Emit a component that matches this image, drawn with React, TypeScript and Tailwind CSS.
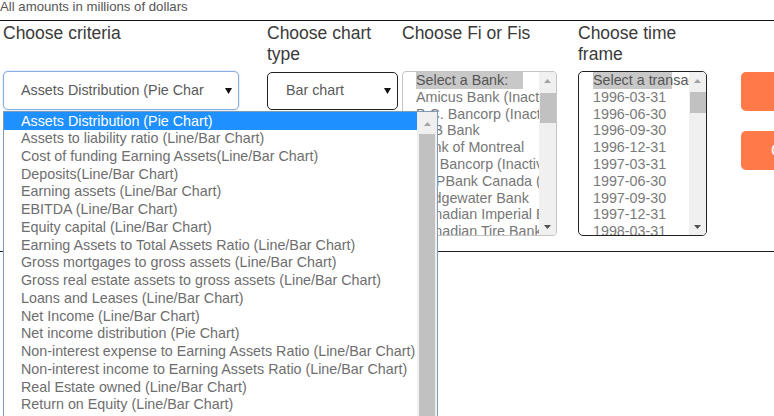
import React from 'react';

const CRITERIA: string[] = [
    'Assets Distribution (Pie Chart)',
    'Assets to liability ratio (Line/Bar Chart)',
    'Cost of funding Earning Assets(Line/Bar Chart)',
    'Deposits(Line/Bar Chart)',
    'Earning assets (Line/Bar Chart)',
    'EBITDA (Line/Bar Chart)',
    'Equity capital (Line/Bar Chart)',
    'Earning Assets to Total Assets Ratio (Line/Bar Chart)',
    'Gross mortgages to gross assets (Line/Bar Chart)',
    'Gross real estate assets to gross assets (Line/Bar Chart)',
    'Loans and Leases (Line/Bar Chart)',
    'Net Income (Line/Bar Chart)',
    'Net income distribution (Pie Chart)',
    'Non-interest expense to Earning Assets Ratio (Line/Bar Chart)',
    'Non-interest income to Earning Assets Ratio (Line/Bar Chart)',
    'Real Estate owned (Line/Bar Chart)',
    'Return on Equity (Line/Bar Chart)',
    'Return on Assets (Line/Bar Chart)',
];

const BANKS: string[] = [
    'Amicus Bank (Inactive)',
    'B.C. Bancorp (Inactive)',
    'B2B Bank',
    'Bank of Montreal',
    'BC Bancorp (Inactive)',
    'BNPBank Canada (Inactive)',
    'Bridgewater Bank',
    'Canadian Imperial Bank of Commerce',
    'Canadian Tire Bank',
    'Canadian Western Bank',
];

const DATES: string[] = [
    '1996-03-31', '1996-06-30', '1996-09-30', '1996-12-31',
    '1997-03-31', '1997-06-30', '1997-09-30', '1997-12-31',
    '1998-03-31', '1998-06-30',
];

const Caret: React.FC = () => (
    <svg width="7" height="6" viewBox="0 0 7 6" className="shrink-0">
        <polygon points="0,0 7,0 3.5,6" fill="#111" />
    </svg>
);

const ScrollArrow: React.FC<{ up?: boolean; dim?: boolean }> = ({ up, dim }) => (
    <svg width="7" height="4" viewBox="0 0 7 4">
        <polygon points={up ? '0,4 7,4 3.5,0' : '0,0 7,0 3.5,4'} fill={dim ? '#a3a3a3' : '#505050'} />
    </svg>
);

// listbox scrollbar, thumb sits near the top
const ListScroll: React.FC<{ thumbTop: string; thumbH: string }> = ({ thumbTop, thumbH }) => (
    <div className="w-[17px] shrink-0 bg-[#f0f0f0] flex flex-col items-center">
        <div className="h-[17px] flex items-center justify-center">
            <ScrollArrow up dim />
        </div>
        <div className={`w-[16px] bg-[#c1c1c1] ${thumbTop} ${thumbH}`} />
        <div className="flex-1" />
        <div className="h-[17px] flex items-center justify-center">
            <ScrollArrow />
        </div>
    </div>
);

const Heading: React.FC<{ children: React.ReactNode; width: string }> = ({ children, width }) => (
    <div className={`h-[48px] ${width} text-[17.5px] leading-[21px] text-[#3a3a3a]`}>{children}</div>
);

const App: React.FC = () => {
    return (
        <div className="w-[774px] h-[416px] overflow-hidden bg-white font-['Liberation_Sans',Arial,sans-serif]">
            <div className="text-[13.2px] leading-[14px] text-[#555]">All amounts in millions of dollars</div>
            <div className="mt-[6px] border-t border-[#111]" />

            <div className="flex pl-[3px] pt-[2px]">
                {/* Criteria */}
                <div className="w-[264px] shrink-0">
                    <Heading width="w-[240px]">Choose criteria</Heading>
                    <div className="relative">
                        <div className="w-[236px] h-[39px] border border-[#86aee0] rounded-[5px] bg-white flex items-center pl-[17px] pr-[6px] shadow-[0_0_2px_rgba(102,150,220,0.5)]">
                            <div className="w-[183px] overflow-hidden whitespace-nowrap text-[14.3px] text-[#5a5a5a]">
                                Assets Distribution (Pie Chart)
                            </div>
                            <div className="flex-1" />
                            <Caret />
                        </div>

                        {/* open dropdown */}
                        <div className="absolute left-0 top-[40px] z-10 w-[435px] h-[330px] border border-[#7f9db9] bg-white flex">
                            <div className="flex-1 overflow-hidden">
                                {CRITERIA.map((c, i) => (
                                    <div
                                        key={c}
                                        className={
                                            i === 0
                                                ? 'h-[18px] leading-[18px] pl-[17px] text-[14.3px] whitespace-nowrap bg-[#1e90ff] text-white'
                                                : 'h-[17.75px] leading-[17.75px] pl-[17px] text-[14.3px] whitespace-nowrap text-[#6e6e6e]'
                                        }
                                    >
                                        {c}
                                    </div>
                                ))}
                            </div>
                            <div className="w-[20px] shrink-0 bg-[#f0f0f0] flex flex-col items-center">
                                <div className="h-[21px] flex items-center justify-center pt-[3px]">
                                    <ScrollArrow up dim />
                                </div>
                                <div className="mt-[1px] w-[16px] flex-1 bg-[#c1c1c1]" />
                            </div>
                        </div>
                    </div>
                </div>

                {/* Chart type */}
                <div className="w-[135px] shrink-0">
                    <Heading width="w-[131px]">Choose chart type</Heading>
                    <div className="mt-[1px] w-[131px] h-[38px] border border-[#222] rounded-[5px] bg-white flex items-center pl-[18px] pr-[6px]">
                        <div className="text-[14.3px] text-[#5a5a5a]">Bar chart</div>
                        <div className="flex-1" />
                        <Caret />
                    </div>
                </div>

                {/* Fi */}
                <div className="w-[176px] shrink-0">
                    <Heading width="w-[160px]">Choose Fi or Fis</Heading>
                    <div className="w-[155px] h-[165px] border border-[#c4c4c4] rounded-[4px] bg-white flex overflow-hidden">
                        <div className="flex-1 overflow-hidden pl-[13px] text-[14.3px] leading-[16.8px] text-[#777]">
                            <div className="whitespace-nowrap">
                                <span className="inline-block w-[107px] bg-[#c8c8c8] text-[#555]">Select a Bank:</span>
                            </div>
                            {BANKS.map((b) => (
                                <div key={b} className="whitespace-nowrap">{b}</div>
                            ))}
                        </div>
                        <ListScroll thumbTop="mt-[4px]" thumbH="h-[30px]" />
                    </div>
                </div>

                {/* Time frame */}
                <div className="w-[163px] shrink-0">
                    <Heading width="w-[129px]">Choose time frame</Heading>
                    <div className="w-[129px] h-[165px] border border-[#222] rounded-[5px] bg-white flex overflow-hidden">
                        <div className="flex-1 overflow-hidden pl-[14px] text-[14.3px] leading-[16.8px] text-[#7a7a7a]">
                            <div className="whitespace-nowrap text-[#555] bg-[linear-gradient(#c8c8c8,#c8c8c8)] bg-no-repeat bg-[length:79px_100%]">
                                Select a transaction date:
                            </div>
                            {DATES.map((d) => (
                                <div key={d} className="whitespace-nowrap">{d}</div>
                            ))}
                        </div>
                        <ListScroll thumbTop="mt-[3px]" thumbH="h-[21px]" />
                    </div>
                </div>

                {/* Buttons */}
                <div className="flex-1 pt-[49px] flex flex-col gap-[20px]">
                    <button className="w-[110px] h-[39px] rounded-[5px] bg-[#ff7a48] text-white text-[17px] text-left pl-[40px]">
                        Submit
                    </button>
                    <button className="w-[110px] h-[39px] rounded-[5px] bg-[#ff7a48] text-white text-[17px] text-left pl-[30px]">
                        Clear
                    </button>
                </div>
            </div>

            <div className="mt-[15px] border-t border-[#222]" />
        </div>
    );
};

export default App;
